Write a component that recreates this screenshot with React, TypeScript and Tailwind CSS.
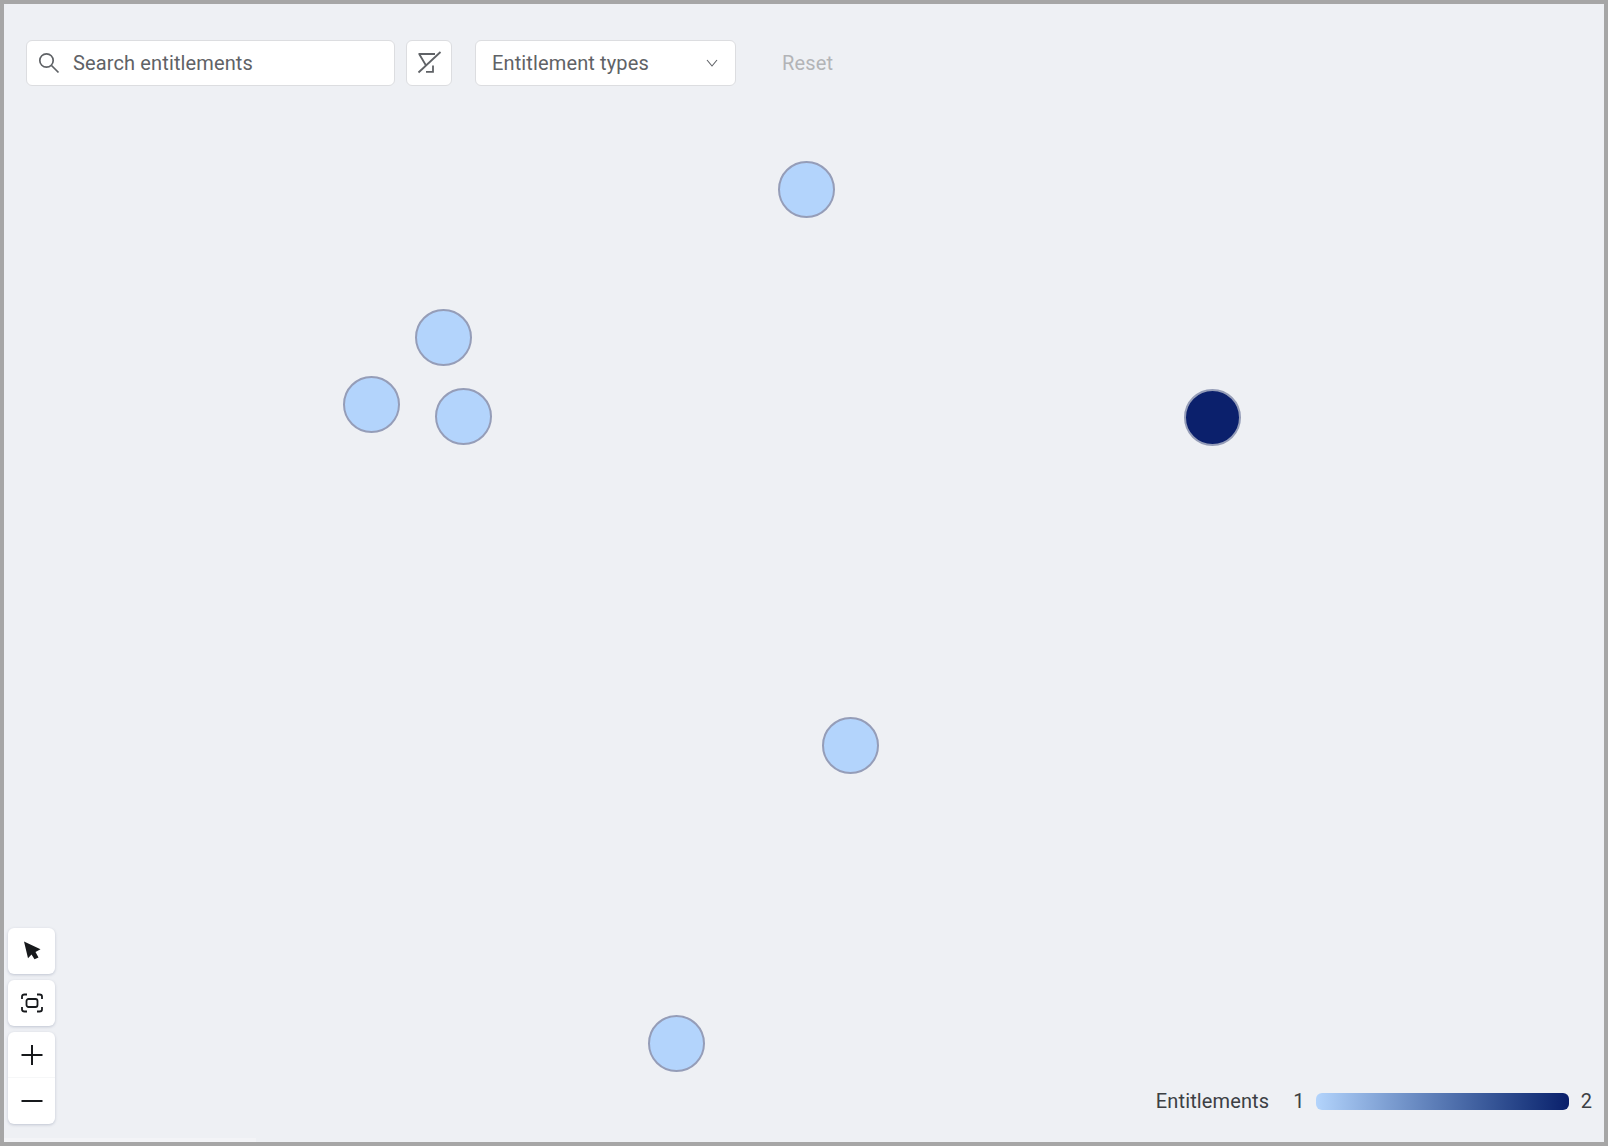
const nodes = [
  { x: 806.5, y: 189, dark: false },
  { x: 443.5, y: 337.5, dark: false },
  { x: 371.5, y: 404.5, dark: false },
  { x: 463, y: 416.5, dark: false },
  { x: 1212.5, y: 417.5, dark: true },
  { x: 850, y: 745, dark: false },
  { x: 676, y: 1043, dark: false },
];

function FilterOffIcon() {
  return (
    <svg width="26" height="24" viewBox="0 0 26 24" fill="none" stroke="#5f6266" strokeWidth="1.8">
      <path d="M24.5 1 L2.5 21.5" />
      <path d="M2.5 3 H19 M3.2 3 L10 14.5 M10 20.8 H17 V14.5" />
    </svg>
  );
}

function FocusIcon() {
  return (
    <svg width="24" height="24" viewBox="0 0 24 24" fill="none" stroke="#17191c" strokeWidth="1.8">
      <path d="M2 8 V5.5 Q2 3.5 4.5 3.5 H7 M17 3.5 H19.5 Q22 3.5 22 5.5 V8 M22 16 V18.5 Q22 20.5 19.5 20.5 H17 M7 20.5 H4.5 Q2 20.5 2 18.5 V16" />
      <rect x="6.5" y="8" width="11" height="8" rx="2" />
    </svg>
  );
}

export default function App() {
  return (
    <div className="relative h-[1146px] w-full overflow-hidden border-4 border-[#a6a6a6] bg-[#eef0f4] font-['Roboto',sans-serif] tracking-[0.13px]">
      {/* Toolbar */}
      <div className="flex items-center pl-[22px] pt-9">
        <div className="flex h-[46px] w-[369px] items-center rounded-md border border-[#dcdde0] bg-white pl-[11px]">
          <svg width="22" height="22" viewBox="0 0 22 22" fill="none" stroke="#5f6266" strokeWidth="1.7">
            <circle cx="8.5" cy="8.5" r="6.7" />
            <path d="M13.5 13.5 L20.5 20.5" />
          </svg>
          <span className="ml-[13px] text-[20px] text-[#5f6266]">Search entitlements</span>
        </div>
        <button className="ml-[11px] flex h-[46px] w-[46px] items-center justify-center rounded-md border border-[#dcdde0] bg-white">
          <FilterOffIcon />
        </button>
        <div className="ml-[23px] flex h-[46px] w-[261px] items-center justify-between rounded-md border border-[#dcdde0] bg-white pl-4 pr-[17px]">
          <span className="text-[20px] text-[#5f6266]">Entitlement types</span>
          <svg width="12" height="8" viewBox="0 0 12 8" fill="none" stroke="#5f6266" strokeWidth="1.1">
            <path d="M1 1 L6 7 L11 1" />
          </svg>
        </div>
        <span className="ml-[46px] text-[20px] text-[#b3b4b7]">Reset</span>
      </div>

      {/* Graph nodes */}
      {nodes.map((n) => (
        <div
          key={`${n.x}-${n.y}`}
          className={`absolute h-[57px] w-[57px] rounded-full border-2 border-[#959db8] ${n.dark ? "bg-[#0b206c]" : "bg-[#b3d4fc]"}`}
          style={{ left: n.x - 32.5, top: n.y - 32.5 }}
        />
      ))}

      {/* Zoom controls */}
      <div className="absolute bottom-[18px] left-1 flex w-[47px] flex-col gap-[6px]">
        <button className="flex h-[46px] items-center justify-center rounded-md bg-white shadow-[0_1px_3px_rgba(60,70,110,0.25)]">
          <svg width="22" height="22" viewBox="0 0 22 22" fill="#17191c">
            <path d="M3 1.5 L19.5 9.3 L14.5 12 L17.5 17.5 L13.5 19.2 L10.5 14.5 L7 18.2 Z" />
          </svg>
        </button>
        <button className="flex h-[46px] items-center justify-center rounded-md bg-white shadow-[0_1px_3px_rgba(60,70,110,0.25)]">
          <FocusIcon />
        </button>
        <div className="flex h-[92px] flex-col rounded-md bg-white shadow-[0_1px_3px_rgba(60,70,110,0.25)]">
          <button className="flex h-[46px] items-center justify-center border-b border-[#f6f7f8]">
            <svg width="24" height="24" viewBox="0 0 24 24" fill="none" stroke="#17191c" strokeWidth="2">
              <path d="M12 2 V22 M1.5 12 H22.5" />
            </svg>
          </button>
          <button className="flex h-[46px] items-center justify-center">
            <svg width="24" height="24" viewBox="0 0 24 24" fill="none" stroke="#17191c" strokeWidth="2">
              <path d="M1.5 12 H22.5" />
            </svg>
          </button>
        </div>
      </div>

      {/* Faint scrollbar */}
      <div className="absolute bottom-0 left-0 h-[4px] w-[252px] bg-[#f3f4f7]" />

      {/* Legend */}
      <div className="absolute bottom-[26px] right-[12px] flex items-center text-[20px] text-[#3c3f44]">
        <span>Entitlements</span>
        <span className="ml-6">1</span>
        <div className="ml-[11px] h-[17px] w-[253px] rounded-md bg-gradient-to-r from-[#b3d4fc] to-[#0a1f6b]" />
        <span className="ml-3">2</span>
      </div>
    </div>
  );
}
